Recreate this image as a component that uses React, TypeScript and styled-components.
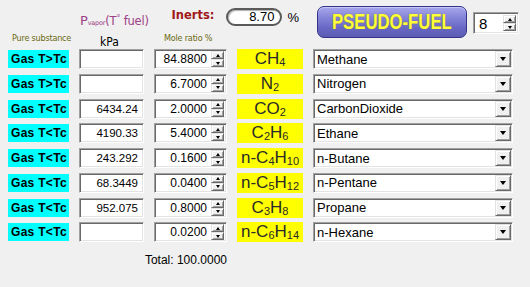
import React from "react";
import styled, { createGlobalStyle, css } from "styled-components";

const GlobalStyle = createGlobalStyle`
  html, body {
    margin: 0;
    padding: 0;
    background: #f0f0f0;
  }
  body {
    font-family: "Liberation Sans", Arial, sans-serif;
  }
`;

const COLS = "61px 65px 73px 66px 200px";

const sunken = css`
  box-sizing: border-box;
  background: #fff;
  border: 1px solid;
  border-color: #a0a0a0 #ffffff #ffffff #a0a0a0;
  box-shadow: inset 1px 1px 0 #696969, inset -1px -1px 0 #e3e3e3;
`;

const raised = css`
  box-sizing: border-box;
  background: #f0f0f0;
  border: 1px solid;
  border-color: #e3e3e3 #696969 #696969 #e3e3e3;
  box-shadow: inset 1px 1px 0 #ffffff, inset -1px -1px 0 #a0a0a0;
`;

const Page = styled.div`
  width: 530px;
  height: 287px;
  box-sizing: border-box;
  padding-left: 8px;
  background: #f0f0f0;
  overflow: hidden;
`;

const Header = styled.div`
  display: grid;
  grid-template-columns: ${COLS};
  grid-template-rows: 30px 19px;
  column-gap: 10px;
`;

const InertsGroup = styled.div`
  grid-column: 3 / 5;
  grid-row: 1;
  align-self: start;
  justify-self: end;
  margin: 8px 4px 0 0;
  display: flex;
  align-items: center;
  gap: 5px;
`;

const InertsLabel = styled.span`
  font-family: "DejaVu Sans", sans-serif;
  font-weight: bold;
  font-size: 11.5px;
  color: #a01818;
  margin-right: 7px;
  margin-top: -4px;
`;

const InertsBox = styled.div`
  width: 56px;
  height: 18px;
  box-sizing: border-box;
  background: #fff;
  border: 2px solid #5a5a5a;
  border-radius: 9px;
  box-shadow: inset 1px 1px 1px #b0b0b0;
  font-size: 13px;
  text-align: right;
  padding-right: 6px;
  line-height: 14px;
  color: #000;
`;

const Percent = styled.span`
  font-size: 13px;
  color: #000;
`;

const PvaporLabel = styled.div`
  grid-column: 2;
  grid-row: 1;
  align-self: end;
  justify-self: start;
  margin-left: 1px;
  white-space: nowrap;
  font-family: "DejaVu Sans", sans-serif;
  font-size: 11.5px;
  color: #9c3f86;
  line-height: 14px;
  letter-spacing: -0.2px;
  sub {
    font-size: 6.5px;
    vertical-align: baseline;
  }
  sup {
    font-size: 8px;
    vertical-align: 4px;
  }
`;

const PvaporBig = styled.span`
  font-size: 13px;
`;

const ColLabel = styled.div<{ $col: number; $dark?: boolean }>`
  grid-column: ${(p) => p.$col};
  grid-row: 2;
  justify-self: start;
  align-self: start;
  margin-left: ${(p) => (p.$col === 1 ? "4px" : p.$col === 2 ? "21px" : "10px")};
  margin-top: ${(p) => (p.$dark ? "5px" : "3px")};
  font-family: "DejaVu Sans Condensed", "DejaVu Sans", sans-serif;
  font-size: ${(p) => (p.$dark ? "12px" : "9px")};
  letter-spacing: ${(p) => (p.$dark ? "0" : "-0.2px")};
  color: ${(p) => (p.$dark ? "#000" : "#6a6a10")};
  white-space: nowrap;
`;

const ButtonArea = styled.div`
  grid-column: 5;
  grid-row: 1 / 3;
  display: flex;
  align-items: flex-start;
  gap: 6px;
  margin-left: 4px;
  width: 220px;
`;

const PseudoButton = styled.button`
  margin-top: 6px;
  width: 150px;
  height: 32px;
  border: 1px solid #34348a;
  border-radius: 7px;
  background: linear-gradient(#a8a8ec 0%, #8484d8 35%, #6868c4 70%, #5c5cb4 100%);
  box-shadow: inset 0 1px 0 #c8c8f8;
  color: #ffff3a;
  font-family: "Liberation Sans", Arial, sans-serif;
  font-weight: bold;
  font-size: 22px;
  padding: 0;
  white-space: nowrap;
  overflow: hidden;
  display: flex;
  align-items: center;
  justify-content: center;
  cursor: pointer;
  span {
    display: inline-block;
    transform: scaleX(0.76);
    text-shadow: 0 0 1px #6a6a20;
  }
`;

const CountSpin = styled.div`
  ${sunken};
  margin-top: 12px;
  width: 46px;
  height: 22px;
  display: flex;
  align-items: center;
  justify-content: space-between;
  padding: 0 2px 0 5px;
  font-size: 15px;
`;

const Rows = styled.div`
  display: grid;
  grid-template-columns: ${COLS};
  grid-auto-rows: 20px;
  column-gap: 10px;
  row-gap: 4.75px;
`;

const StateTag = styled.div`
  background: #00ffff;
  font-weight: bold;
  font-size: 12px;
  letter-spacing: 0.3px;
  color: #000;
  display: flex;
  align-items: center;
  padding-left: 3px;
  margin: 1px 0;
`;

const NumBox = styled.div<{ $small?: boolean }>`
  ${sunken};
  display: flex;
  align-items: center;
  justify-content: flex-end;
  padding-right: ${(p) => (p.$small ? "5px" : "2px")};
  font-size: ${(p) => (p.$small ? "11.5px" : "12px")};
  color: #000;
`;

const SpinButtons = styled.div`
  display: flex;
  flex-direction: column;
  width: 13px;
  height: 16px;
  margin-left: 4px;
`;

const SpinHalf = styled.div<{ $up?: boolean }>`
  ${raised};
  flex: 1;
  display: flex;
  align-items: center;
  justify-content: center;
  &::after {
    content: "";
    border-left: 2.5px solid transparent;
    border-right: 2.5px solid transparent;
    ${(p) =>
      p.$up
        ? "border-bottom: 3px solid #000;"
        : "border-top: 3px solid #000;"}
  }
`;

const FormulaTag = styled.div`
  background: #ffff00;
  display: flex;
  align-items: center;
  justify-content: center;
  font-size: 17px;
  color: #2a2a2a;
  line-height: 20px;
`;

const FormulaText = styled.span`
  white-space: nowrap;
  sub {
    font-size: 11px;
    position: relative;
    top: 2px;
    vertical-align: baseline;
    line-height: 0;
  }
`;

const Select = styled.div`
  ${sunken};
  display: flex;
  align-items: center;
  padding-left: 3px;
  font-size: 13px;
  color: #000;
`;

const SelectText = styled.span`
  flex: 1;
`;

const ArrowButton = styled.div`
  ${raised};
  width: 16px;
  height: 16px;
  margin-right: 1px;
  display: flex;
  align-items: center;
  justify-content: center;
  &::after {
    content: "";
    border-left: 3.5px solid transparent;
    border-right: 3.5px solid transparent;
    border-top: 4px solid #000;
  }
`;

const TotalLine = styled.div`
  grid-column: 2 / 4;
  justify-self: end;
  margin-top: 6px;
  font-size: 12px;
  color: #000;
`;

type Row = {
  state: string;
  pvap: string;
  mole: string;
  formula: string;
  name: string;
};

const rows: Row[] = [
  { state: "Gas T>Tc", pvap: "", mole: "84.8800", formula: "CH4", name: "Methane" },
  { state: "Gas T>Tc", pvap: "", mole: "6.7000", formula: "N2", name: "Nitrogen" },
  { state: "Gas T<Tc", pvap: "6434.24", mole: "2.0000", formula: "CO2", name: "CarbonDioxide" },
  { state: "Gas T<Tc", pvap: "4190.33", mole: "5.4000", formula: "C2H6", name: "Ethane" },
  { state: "Gas T<Tc", pvap: "243.292", mole: "0.1600", formula: "n-C4H10", name: "n-Butane" },
  { state: "Gas T<Tc", pvap: "68.3449", mole: "0.0400", formula: "n-C5H12", name: "n-Pentane" },
  { state: "Gas T<Tc", pvap: "952.075", mole: "0.8000", formula: "C3H8", name: "Propane" },
  { state: "Gas T<Tc", pvap: "", mole: "0.0200", formula: "n-C6H14", name: "n-Hexane" },
];

// digits in a formula are written as subscripts
const Formula: React.FC<{ text: string }> = ({ text }) => (
  <FormulaText>
    {text.split(/(\d+)/).map((part, i) =>
      /^\d+$/.test(part) ? <sub key={i}>{part}</sub> : <span key={i}>{part}</span>
    )}
  </FormulaText>
);

const Spin = () => (
  <SpinButtons>
    <SpinHalf $up />
    <SpinHalf />
  </SpinButtons>
);

export default function App() {
  return (
    <Page>
      <GlobalStyle />
      <Header>
        <InertsGroup>
          <InertsLabel>Inerts:</InertsLabel>
          <InertsBox>8.70</InertsBox>
          <Percent>%</Percent>
        </InertsGroup>
        <PvaporLabel>
          <PvaporBig>P</PvaporBig>
          <sub>vapor</sub>(T<sup>°</sup> fuel)
        </PvaporLabel>
        <ButtonArea>
          <PseudoButton>
            <span>PSEUDO-FUEL</span>
          </PseudoButton>
          <CountSpin>
            8
            <Spin />
          </CountSpin>
        </ButtonArea>
        <ColLabel $col={1}>Pure substance</ColLabel>
        <ColLabel $col={2} $dark>
          kPa
        </ColLabel>
        <ColLabel $col={3}>Mole ratio %</ColLabel>
      </Header>
      <Rows>
        {rows.map((r) => (
          <React.Fragment key={r.name}>
            <StateTag>{r.state}</StateTag>
            <NumBox $small>{r.pvap}</NumBox>
            <NumBox>
              {r.mole}
              <Spin />
            </NumBox>
            <FormulaTag>
              <Formula text={r.formula} />
            </FormulaTag>
            <Select>
              <SelectText>{r.name}</SelectText>
              <ArrowButton />
            </Select>
          </React.Fragment>
        ))}
        <TotalLine>Total: 100.0000</TotalLine>
      </Rows>
    </Page>
  );
}
